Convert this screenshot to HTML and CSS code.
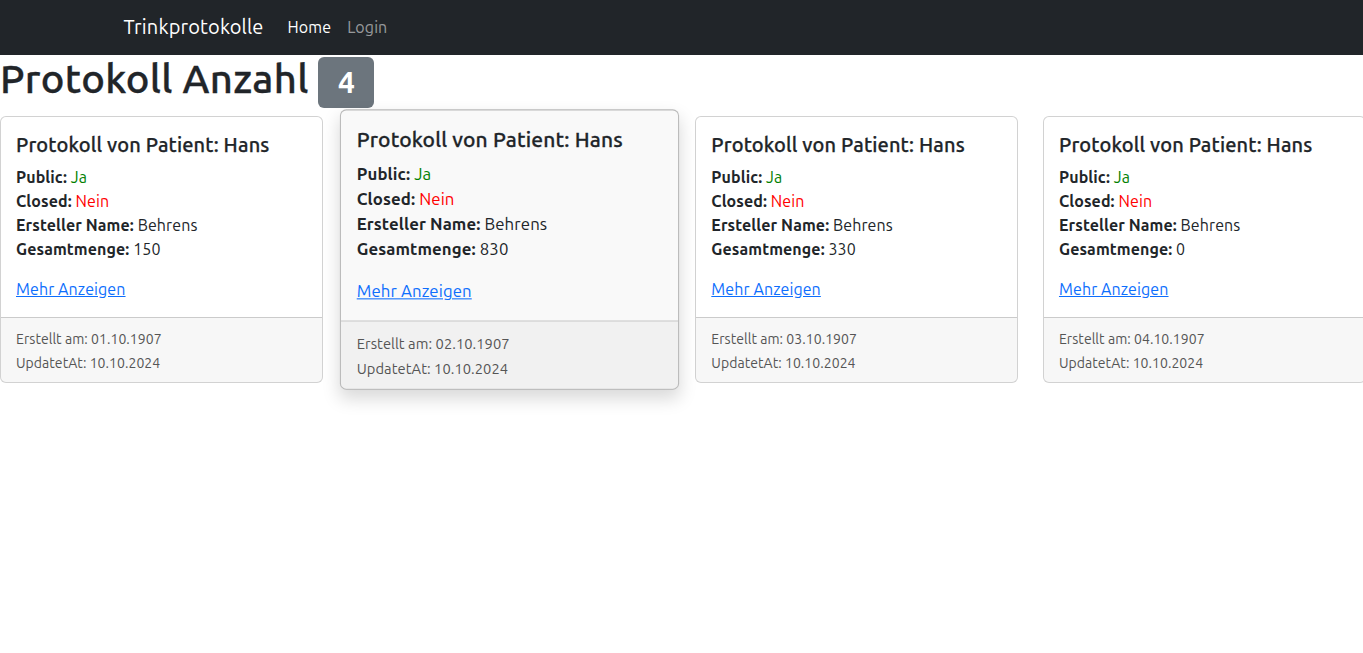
FILE: index.html
```html
<!DOCTYPE html>
<html lang="de">
<head>
<meta charset="utf-8">
<title>Trinkprotokolle</title>
<link rel="stylesheet" href="styles.css">
</head>
<body>
<nav class="navbar">
  <div class="nav-container">
    <a class="brand" href="#">Trinkprotokolle</a>
    <ul class="nav">
      <li><a class="nav-link active" href="#">Home</a></li>
      <li><a class="nav-link" href="#">Login</a></li>
    </ul>
  </div>
</nav>
<main class="page">
  <h1 class="heading">Protokoll Anzahl <span class="badge">4</span></h1>
  <div class="cards">
    <div class="card">
      <div class="card-body">
        <h5 class="card-title">Protokoll von Patient: Hans</h5>
        <p class="card-text">
          <strong>Public:</strong> <span class="yes">Ja</span><br>
          <strong>Closed:</strong> <span class="no">Nein</span><br>
          <strong>Ersteller Name:</strong> Behrens<br>
          <strong>Gesamtmenge:</strong> 150
        </p>
        <a class="more" href="#">Mehr Anzeigen</a>
      </div>
      <div class="card-footer">
        <div><small>Erstellt am: 01.10.1907</small></div>
        <div><small>UpdatetAt: 10.10.2024</small></div>
      </div>
    </div>
    <div class="card hovered">
      <div class="card-body">
        <h5 class="card-title">Protokoll von Patient: Hans</h5>
        <p class="card-text">
          <strong>Public:</strong> <span class="yes">Ja</span><br>
          <strong>Closed:</strong> <span class="no">Nein</span><br>
          <strong>Ersteller Name:</strong> Behrens<br>
          <strong>Gesamtmenge:</strong> 830
        </p>
        <a class="more" href="#">Mehr Anzeigen</a>
      </div>
      <div class="card-footer">
        <div><small>Erstellt am: 02.10.1907</small></div>
        <div><small>UpdatetAt: 10.10.2024</small></div>
      </div>
    </div>
    <div class="card">
      <div class="card-body">
        <h5 class="card-title">Protokoll von Patient: Hans</h5>
        <p class="card-text">
          <strong>Public:</strong> <span class="yes">Ja</span><br>
          <strong>Closed:</strong> <span class="no">Nein</span><br>
          <strong>Ersteller Name:</strong> Behrens<br>
          <strong>Gesamtmenge:</strong> 330
        </p>
        <a class="more" href="#">Mehr Anzeigen</a>
      </div>
      <div class="card-footer">
        <div><small>Erstellt am: 03.10.1907</small></div>
        <div><small>UpdatetAt: 10.10.2024</small></div>
      </div>
    </div>
    <div class="card">
      <div class="card-body">
        <h5 class="card-title">Protokoll von Patient: Hans</h5>
        <p class="card-text">
          <strong>Public:</strong> <span class="yes">Ja</span><br>
          <strong>Closed:</strong> <span class="no">Nein</span><br>
          <strong>Ersteller Name:</strong> Behrens<br>
          <strong>Gesamtmenge:</strong> 0
        </p>
        <a class="more" href="#">Mehr Anzeigen</a>
      </div>
      <div class="card-footer">
        <div><small>Erstellt am: 04.10.1907</small></div>
        <div><small>UpdatetAt: 10.10.2024</small></div>
      </div>
    </div>
  </div>
</main>
</body>
</html>
```
FILE: styles.css
```css
* { box-sizing: border-box; }
html, body { margin: 0; padding: 0; }
body {
  font-family: Ubuntu, "Noto Sans", "Liberation Sans", sans-serif;
  font-size: 16px;
  line-height: 1.5;
  color: #212529;
  background: #fff;
}
.navbar {
  background: #212529;
  height: 55px;
  display: flex;
  align-items: center;
}
.nav-container {
  width: 1140px;
  margin: 0 auto;
  padding: 0 12px;
  display: flex;
  align-items: center;
  position: relative;
  top: -1px;
}
.brand {
  color: #fff;
  font-size: 20px;
  text-decoration: none;
  margin-right: 16px;
  line-height: 30px;
  letter-spacing: 0.15px;
}
.nav {
  list-style: none;
  margin: 0;
  padding: 0;
  display: flex;
}
.nav-link {
  display: block;
  padding: 8px;
  color: rgba(255, 255, 255, 0.55);
  text-decoration: none;
  letter-spacing: 0.1px;
}
.nav-link.active { color: #fff; }
.page {
  overflow: hidden;
  padding-bottom: 48px;
}
.heading {
  margin: 0;
  font-size: 40px;
  font-weight: 500;
  line-height: 1.2;
  letter-spacing: 0.35px;
  -webkit-text-stroke: 0.35px #212529;
}
.badge {
  display: inline-block;
  background: #6c757d;
  color: #fff;
  font-size: 0.75em;
  font-weight: 700;
  line-height: 1;
  padding: 0.35em 0.65em;
  border-radius: 6px;
  vertical-align: baseline;
  letter-spacing: 0;
  -webkit-text-stroke: 0;
}
.cards {
  display: flex;
  gap: 24.67px;
  margin-top: 8px;
  width: 1366px;
}
.card {
  flex: 0 0 323px;
  border: 1px solid rgba(0, 0, 0, 0.175);
  border-radius: 6px;
  background: #fff;
  overflow: hidden;
  display: flex;
  flex-direction: column;
}
.card.hovered {
  transform: scale(1.05);
  background: #f9f9f9;
  border-color: rgba(0, 0, 0, 0.25);
  box-shadow: 0 8px 16px rgba(0, 0, 0, 0.15);
}
.card-body {
  padding: 16px 16px 16px 15px;
}
.card-title {
  margin: 0 0 8px;
  font-size: 20px;
  font-weight: 500;
  line-height: 1.2;
  letter-spacing: 0.15px;
  -webkit-text-stroke: 0.25px #212529;
}
.card-text {
  margin: 0 0 16px;
  letter-spacing: 0.1px;
}
.yes { color: green; }
.no { color: red; }
.more {
  color: #0d6efd;
  text-decoration: underline;
  letter-spacing: 0.1px;
}
.card-footer {
  padding: 8px 16px 8px 15px;
  background: rgba(0, 0, 0, 0.03);
  border-top: 1px solid rgba(0, 0, 0, 0.175);
  color: #555;
}
.card-footer small { font-size: 14px; letter-spacing: 0.05px; }
```
